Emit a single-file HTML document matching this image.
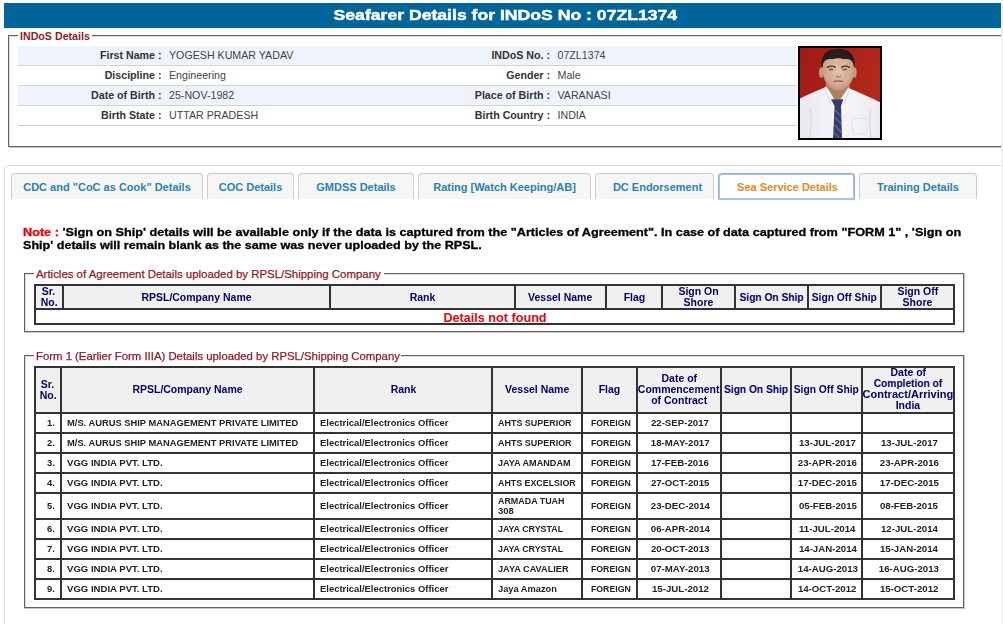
<!DOCTYPE html><html><head><meta charset="utf-8"><title>Seafarer Details</title><style>
html,body{margin:0;padding:0;}
body{width:1003px;height:624px;overflow:hidden;position:relative;background:#fff;font-family:"Liberation Sans", sans-serif;}
.abs{position:absolute;}
.nw{white-space:nowrap;}
.hdr{left:4px;top:3px;width:997px;height:25px;background:#006699;}
.title{left:0;top:3px;width:1011px;height:25px;line-height:25px;text-align:center;color:#fff;font-weight:bold;font-size:14.6px;-webkit-text-stroke:0.45px #fff;}
.title span{display:inline-block;transform:scaleX(1.207);transform-origin:center;}
.ln{background:#636363;}
.ln2{background:#c8c8c8;}
.ln3{background:#dedede;}
.leg{color:#8e1b2c;font-size:10.67px;font-weight:bold;line-height:12px;}
.leg2{color:#8e1b2c;font-size:11.43px;line-height:13px;-webkit-text-stroke:0.25px #8e1b2c;}
.row{left:18px;width:779px;height:19px;border-bottom:1px solid #d3d3d3;}
.row.alt{background:#eff4fc;}
.lab{font-size:10.67px;font-weight:bold;color:#333;text-align:right;line-height:19px;height:19px;}
.val{font-size:10.67px;color:#444;line-height:19px;height:19px;}
.photo{left:798px;top:46px;width:80px;height:90px;border:2px solid #000;overflow:hidden;}
.tabs{left:4px;top:165px;width:1020px;height:480px;border:1px solid #ddd;border-radius:4px;box-sizing:border-box;}
.tab{top:173px;height:26px;box-sizing:border-box;border:1px solid #ccc;border-bottom:0;border-radius:4px 4px 0 0;background:#f6f6f6;color:#2b81b3;font-weight:bold;font-size:11px;text-align:center;line-height:27px;}
.tab.act{background:#fff;color:#df8a26;border:1px solid #9fb0cc;border-bottom-color:#a9c1ee;height:27px;box-shadow:0 0 0 1px #a9c1ee inset, 0 0 1px 0 #a6c0ea;border-radius:4px 4px 1px 1px;}
.note{left:22.6px;font-size:11.3px;font-weight:bold;color:#000;-webkit-text-stroke:0.3px;line-height:13px;height:13px;transform-origin:left center;}
.red{color:#e8000b;}
table{border-collapse:separate;border-spacing:0;border:1px solid #333;table-layout:fixed;position:absolute;left:34px;width:921px;}
td,th{border:1px solid #333;padding:0;overflow:visible;}
th{background:#f0f0f0;color:#000066;font-size:10.2px;font-weight:bold;line-height:11px;text-align:center;vertical-align:middle;white-space:nowrap;}
td{font-size:8.3px;font-weight:bold;color:#222;line-height:10px;vertical-align:middle;white-space:nowrap;}
td.c{text-align:center;padding-left:2px;}
td.r{text-align:right;padding-right:5px;}
td.l{text-align:left;padding-left:5px;}
.s{display:inline-block;transform-origin:left center;}
.c .s, th .s{transform-origin:center center;}
.r .s{transform-origin:right center;}
.nf{padding-top:0;color:#dc0812;font-size:12px;font-weight:bold;text-align:center;line-height:13px;}
</style></head><body>
<div class="abs hdr"></div>
<div class="abs title nw"><span>Seafarer Details for INDoS No : 07ZL1374</span></div>
<div class="abs ln" style="left:8px;top:35px;width:1px;height:112px"></div>
<div class="abs ln" style="left:8px;top:35px;width:10px;height:1px"></div>
<div class="abs ln" style="left:92px;top:35px;width:909px;height:1px"></div>
<div class="abs ln" style="left:8px;top:146px;width:993px;height:1px"></div>
<div class="abs ln3" style="left:9px;top:36px;width:1px;height:110px"></div>
<div class="abs ln3" style="left:9px;top:36px;width:9px;height:1px"></div>
<div class="abs ln3" style="left:92px;top:36px;width:909px;height:1px"></div>
<div class="abs ln2" style="left:9px;top:147px;width:992px;height:1px"></div>
<div class="abs leg nw" style="left:20px;top:30px">INDoS Details</div>
<div class="abs row alt" style="top:46px"></div>
<div class="abs lab nw" style="left:18px;width:143.5px;top:46px">First Name :</div>
<div class="abs val nw" style="left:169px;top:46px">YOGESH KUMAR YADAV</div>
<div class="abs lab nw" style="left:400px;width:150px;top:46px">INDoS No. :</div>
<div class="abs val nw" style="left:557.5px;top:46px">07ZL1374</div>
<div class="abs row" style="top:66px"></div>
<div class="abs lab nw" style="left:18px;width:143.5px;top:66px">Discipline :</div>
<div class="abs val nw" style="left:169px;top:66px">Engineering</div>
<div class="abs lab nw" style="left:400px;width:150px;top:66px">Gender :</div>
<div class="abs val nw" style="left:557.5px;top:66px">Male</div>
<div class="abs row alt" style="top:86px"></div>
<div class="abs lab nw" style="left:18px;width:143.5px;top:86px">Date of Birth :</div>
<div class="abs val nw" style="left:169px;top:86px">25-NOV-1982</div>
<div class="abs lab nw" style="left:400px;width:150px;top:86px">Place of Birth :</div>
<div class="abs val nw" style="left:557.5px;top:86px">VARANASI</div>
<div class="abs row" style="top:106px"></div>
<div class="abs lab nw" style="left:18px;width:143.5px;top:106px">Birth State :</div>
<div class="abs val nw" style="left:169px;top:106px">UTTAR PRADESH</div>
<div class="abs lab nw" style="left:400px;width:150px;top:106px">Birth Country :</div>
<div class="abs val nw" style="left:557.5px;top:106px">INDIA</div>
<div class="abs photo"><svg width="80" height="90" viewBox="0 0 80 90" style="display:block"><defs><linearGradient id="pbg" x1="0" y1="0" x2="1" y2="0.3"><stop offset="0" stop-color="#9f1c15"/><stop offset="0.55" stop-color="#aa2118"/><stop offset="1" stop-color="#b3291b"/></linearGradient><radialGradient id="pfc" cx="0.5" cy="0.45" r="0.62"><stop offset="0" stop-color="#e3c2ad"/><stop offset="0.65" stop-color="#d2aa92"/><stop offset="1" stop-color="#b0866c"/></radialGradient><linearGradient id="psh" x1="0" y1="0" x2="1" y2="0"><stop offset="0" stop-color="#e9e7ef"/><stop offset="0.35" stop-color="#f4f2f7"/><stop offset="0.7" stop-color="#f4f2f7"/><stop offset="1" stop-color="#ebe9f0"/></linearGradient><filter id="pbl" x="-5%" y="-5%" width="110%" height="110%"><feGaussianBlur stdDeviation="0.5"/></filter></defs><rect width="80" height="90" fill="url(#pbg)"/><g filter="url(#pbl)"><path d="M-1 51 C8 46.5 17 42.5 24.6 39.4 L38 44 L49.7 40.6 C60 45 70 49.5 81 54.8 L81 91 L-1 91Z" fill="url(#psh)"/><path d="M27 33 L50 33 L49.6 41.5 L43.5 51.5 L31 51.5 L25 39.8Z" fill="#ad7f64"/><ellipse cx="21.4" cy="24.4" rx="2.4" ry="5.4" fill="#c39a80"/><ellipse cx="54.5" cy="24.4" rx="2.2" ry="5.4" fill="#c39a80"/><path d="M22.6 22 C22 12 27 6 38.3 6 C49.6 6 54.6 12 54 22 C53.8 28 52.6 32 50.4 35.4 C47.4 40 43 42.4 38.4 42.4 C34 42.4 29.6 40 26.6 35.4 C24.2 32 22.8 28 22.6 22Z" fill="url(#pfc)"/><path d="M21.8 20.5 C20.4 9 24.5 0.7 38 0.7 C51.5 0.7 55.8 9 54.4 20.5 C53.8 16 52.6 13.4 50.6 12 C47.8 10.2 44.6 11.4 42 10.8 C39.6 10.2 37 10.2 34.6 10.8 C32 11.4 28.8 10.2 26 12 C23.8 13.4 22.4 16 21.8 20.5Z" fill="#2a1e1b"/><path d="M27.3 19.3 C29.8 17.9 32.8 17.9 35.2 19.1 M41.6 19.1 C44 17.9 47 17.9 49.5 19.3" stroke="#44302a" stroke-width="1.4" fill="none" stroke-linecap="round"/><ellipse cx="31.2" cy="21.6" rx="2.4" ry="1" fill="#7a5a4a"/><ellipse cx="44.8" cy="21.6" rx="2.4" ry="1" fill="#7a5a4a"/><path d="M36 28.2 C37.4 29.2 39.6 29.2 41 28.2" stroke="#a67a62" stroke-width="1.1" fill="none"/><path d="M34 33.5 C36.4 32.8 40.6 32.8 43 33.5" stroke="#8f5a4e" stroke-width="1.3" fill="none" stroke-linecap="round"/><path d="M24.6 39.4 L26.4 38.5 L34.5 51.5 L31 56 Z" fill="#fbfafc"/><path d="M49.7 40.6 L48.4 39.6 L40.2 51.5 L43.8 56 Z" fill="#fbfafc"/><path d="M31 56 L24.6 39.4 M43.8 56 L49.7 40.6" stroke="#cfccd6" stroke-width="0.7" fill="none"/><path d="M31 51.2 L43.4 51.2 L41 58 L42 91 L33 91 L34.6 58Z" fill="#343e6c"/><path d="M35.2 62 L40.6 68 M34.9 69 L41 76 M34.4 76.5 L41.4 84.5 M33.8 84 L40 91" stroke="#7a84b0" stroke-width="1" fill="none"/><path d="M52 70 L67 70.5 L66.5 86 L52.5 85.5Z" fill="none" stroke="#e0dde6" stroke-width="0.8"/><path d="M10 60 C12 70 11 80 10 90 M70 62 C69 72 70 82 71 90" stroke="#dddae4" stroke-width="1.4" fill="none"/></g></svg>
</div>
<div class="abs tabs"></div>
<div class="abs tab nw" style="left:11px;width:192px;">CDC and "CoC as Cook" Details</div>
<div class="abs tab nw" style="left:207px;width:87px;">COC Details</div>
<div class="abs tab nw" style="left:298px;width:116px;">GMDSS Details</div>
<div class="abs tab nw" style="left:418px;width:173px;">Rating [Watch Keeping/AB]</div>
<div class="abs tab nw" style="left:595px;width:119px;padding-left:6px;">DC Endorsement</div>
<div class="abs tab nw act" style="left:718px;width:137px;padding-left:2px;">Sea Service Details</div>
<div class="abs tab nw" style="left:859px;width:118px;">Training Details</div>
<div class="abs note nw" style="top:226px;transform:scaleX(1.1220)"><span class="red">Note :</span> 'Sign on Ship' details will be available only if the data is captured from the "Articles of Agreement". In case of data captured from "FORM 1" , 'Sign on</div>
<div class="abs note nw" style="top:239px;transform:scaleX(1.1135)">Ship' details will remain blank as the same was never uploaded by the RPSL.</div>
<div class="abs ln" style="left:24px;top:273px;width:1px;height:59px"></div>
<div class="abs ln" style="left:963px;top:273px;width:1px;height:59px"></div>
<div class="abs ln2" style="left:964px;top:273px;width:1px;height:60px"></div>
<div class="abs ln" style="left:24px;top:273px;width:10px;height:1px"></div>
<div class="abs ln" style="left:384px;top:273px;width:580px;height:1px"></div>
<div class="abs ln" style="left:24px;top:331px;width:940px;height:1px"></div>
<div class="abs ln3" style="left:25px;top:274px;width:1px;height:57px"></div>
<div class="abs ln3" style="left:25px;top:274px;width:9px;height:1px"></div>
<div class="abs ln3" style="left:384px;top:274px;width:579px;height:1px"></div>
<div class="abs ln2" style="left:24px;top:332px;width:941px;height:1px"></div>
<div class="abs leg2 nw" style="left:36px;top:268px;transform-origin:left center;transform:scaleX(1)">Articles of Agreement Details uploaded by RPSL/Shipping Company</div>
<table style="top:284px"><colgroup><col style="width:28px"><col style="width:267px"><col style="width:185px"><col style="width:91px"><col style="width:56px"><col style="width:73px"><col style="width:73px"><col style="width:73px"><col style="width:73px"></colgroup>
<tr style="height:24px"><th><span class="s" style="transform:scaleX(1.03)">Sr.</span><br><span class="s" style="transform:scaleX(1.03)">No.</span></th><th><span class="s" style="transform:scaleX(1.03)">RPSL/Company Name</span></th><th><span class="s" style="transform:scaleX(1.03)">Rank</span></th><th><span class="s" style="transform:scaleX(1.03)">Vessel Name</span></th><th><span class="s" style="transform:scaleX(1.03)">Flag</span></th><th><span class="s" style="transform:scaleX(1.03)">Sign On</span><br><span class="s" style="transform:scaleX(1.03)">Shore</span></th><th><span class="s" style="transform:scaleX(1.0)">Sign On Ship</span></th><th><span class="s" style="transform:scaleX(1.01)">Sign Off Ship</span></th><th><span class="s" style="transform:scaleX(1.03)">Sign Off</span><br><span class="s" style="transform:scaleX(1.03)">Shore</span></th></tr>
<tr style="height:15px"><td colspan="9" class="nf"><span class="s" style="transform-origin:center;transform:translateY(1.6px) scaleX(1.053)">Details not found</span></td></tr>
</table>
<div class="abs ln" style="left:24px;top:355px;width:1px;height:253px"></div>
<div class="abs ln" style="left:963px;top:355px;width:1px;height:253px"></div>
<div class="abs ln2" style="left:964px;top:355px;width:1px;height:254px"></div>
<div class="abs ln" style="left:24px;top:355px;width:10px;height:1px"></div>
<div class="abs ln" style="left:401px;top:355px;width:563px;height:1px"></div>
<div class="abs ln" style="left:24px;top:607px;width:940px;height:1px"></div>
<div class="abs ln3" style="left:25px;top:356px;width:1px;height:251px"></div>
<div class="abs ln3" style="left:25px;top:356px;width:9px;height:1px"></div>
<div class="abs ln3" style="left:401px;top:356px;width:562px;height:1px"></div>
<div class="abs ln2" style="left:24px;top:608px;width:941px;height:1px"></div>
<div class="abs leg2 nw" style="left:36.1px;top:350px;transform-origin:left center;transform:scaleX(0.9935)">Form 1 (Earlier Form IIIA) Details uploaded by RPSL/Shipping Company</div>
<table style="top:366px"><colgroup><col style="width:26px"><col style="width:253px"><col style="width:178px"><col style="width:90px"><col style="width:55px"><col style="width:84px"><col style="width:70px"><col style="width:71px"><col style="width:92px"></colgroup>
<tr style="height:46px"><th><span class="s" style="transform:scaleX(1.03)">Sr.</span><br><span class="s" style="transform:scaleX(1.03)">No.</span></th><th><div style="position:relative;top:-1px"><span class="s" style="transform:scaleX(1.03)">RPSL/Company Name</span></div></th><th><div style="position:relative;top:-1px"><span class="s" style="transform:scaleX(1.03)">Rank</span></div></th><th><div style="position:relative;top:-1px"><span class="s" style="transform:scaleX(1.03)">Vessel Name</span></div></th><th><div style="position:relative;top:-1px"><span class="s" style="transform:scaleX(1.03)">Flag</span></div></th><th><div style="position:relative;top:-1px"><span class="s" style="transform:scaleX(1.03)">Date of</span><br><span class="s" style="transform:scaleX(1.03)">Commencement</span><br><span class="s" style="transform:scaleX(1.03)">of Contract</span></div></th><th><div style="position:relative;top:-1px"><span class="s" style="transform:scaleX(1.0)">Sign On Ship</span></div></th><th><div style="position:relative;top:-1px"><span class="s" style="transform:scaleX(1.01)">Sign Off Ship</span></div></th><th><div style="position:relative;top:-1px"><span class="s" style="transform:scaleX(1.03)">Date of</span><br><span class="s" style="transform:scaleX(1.0)">Completion of</span><br><span class="s" style="transform:scaleX(1.085)">Contract/Arriving</span><br><span class="s" style="transform:scaleX(1.03)">India</span></div></th></tr>
<tr style="height:20px"><td class="r"><span class="s" style="transform:scaleX(1.127)">1.</span></td><td class="l"><span class="s" style="transform:scaleX(1.126)">M/S. AURUS SHIP MANAGEMENT PRIVATE LIMITED</span></td><td class="l"><span class="s" style="transform:scaleX(1.136)">Electrical/Electronics Officer</span></td><td class="l"><span class="s" style="transform:scaleX(1.078)">AHTS SUPERIOR</span></td><td class="c"><span class="s" style="transform:scaleX(1.058)">FOREIGN</span></td><td class="c"><span class="s" style="transform:scaleX(1.164)">22-SEP-2017</span></td><td class="c"></td><td class="c"><span class="s" style="transform:scaleX(1.164)"></span></td><td class="c"><span class="s" style="transform:scaleX(1.164)"></span></td></tr>
<tr style="height:20px"><td class="r"><span class="s" style="transform:scaleX(1.127)">2.</span></td><td class="l"><span class="s" style="transform:scaleX(1.126)">M/S. AURUS SHIP MANAGEMENT PRIVATE LIMITED</span></td><td class="l"><span class="s" style="transform:scaleX(1.136)">Electrical/Electronics Officer</span></td><td class="l"><span class="s" style="transform:scaleX(1.078)">AHTS SUPERIOR</span></td><td class="c"><span class="s" style="transform:scaleX(1.058)">FOREIGN</span></td><td class="c"><span class="s" style="transform:scaleX(1.164)">18-MAY-2017</span></td><td class="c"></td><td class="c"><span class="s" style="transform:scaleX(1.164)">13-JUL-2017</span></td><td class="c"><span class="s" style="transform:scaleX(1.164)">13-JUL-2017</span></td></tr>
<tr style="height:20px"><td class="r"><span class="s" style="transform:scaleX(1.127)">3.</span></td><td class="l"><span class="s" style="transform:scaleX(1.153)">VGG INDIA PVT. LTD.</span></td><td class="l"><span class="s" style="transform:scaleX(1.136)">Electrical/Electronics Officer</span></td><td class="l"><span class="s" style="transform:scaleX(1.099)">JAYA AMANDAM</span></td><td class="c"><span class="s" style="transform:scaleX(1.058)">FOREIGN</span></td><td class="c"><span class="s" style="transform:scaleX(1.164)">17-FEB-2016</span></td><td class="c"></td><td class="c"><span class="s" style="transform:scaleX(1.164)">23-APR-2016</span></td><td class="c"><span class="s" style="transform:scaleX(1.164)">23-APR-2016</span></td></tr>
<tr style="height:20px"><td class="r"><span class="s" style="transform:scaleX(1.127)">4.</span></td><td class="l"><span class="s" style="transform:scaleX(1.153)">VGG INDIA PVT. LTD.</span></td><td class="l"><span class="s" style="transform:scaleX(1.136)">Electrical/Electronics Officer</span></td><td class="l"><span class="s" style="transform:scaleX(1.067)">AHTS EXCELSIOR</span></td><td class="c"><span class="s" style="transform:scaleX(1.058)">FOREIGN</span></td><td class="c"><span class="s" style="transform:scaleX(1.164)">27-OCT-2015</span></td><td class="c"></td><td class="c"><span class="s" style="transform:scaleX(1.164)">17-DEC-2015</span></td><td class="c"><span class="s" style="transform:scaleX(1.164)">17-DEC-2015</span></td></tr>
<tr style="height:26px"><td class="r"><span class="s" style="transform:scaleX(1.127)">5.</span></td><td class="l"><span class="s" style="transform:scaleX(1.153)">VGG INDIA PVT. LTD.</span></td><td class="l"><span class="s" style="transform:scaleX(1.136)">Electrical/Electronics Officer</span></td><td class="l"><span class="s" style="transform:scaleX(1.073)">ARMADA TUAH</span><br><span class="s" style="transform:scaleX(1.127)">308</span></td><td class="c"><span class="s" style="transform:scaleX(1.058)">FOREIGN</span></td><td class="c"><span class="s" style="transform:scaleX(1.164)">23-DEC-2014</span></td><td class="c"></td><td class="c"><span class="s" style="transform:scaleX(1.164)">05-FEB-2015</span></td><td class="c"><span class="s" style="transform:scaleX(1.164)">08-FEB-2015</span></td></tr>
<tr style="height:20px"><td class="r"><span class="s" style="transform:scaleX(1.127)">6.</span></td><td class="l"><span class="s" style="transform:scaleX(1.153)">VGG INDIA PVT. LTD.</span></td><td class="l"><span class="s" style="transform:scaleX(1.136)">Electrical/Electronics Officer</span></td><td class="l"><span class="s" style="transform:scaleX(1.069)">JAYA CRYSTAL</span></td><td class="c"><span class="s" style="transform:scaleX(1.058)">FOREIGN</span></td><td class="c"><span class="s" style="transform:scaleX(1.164)">06-APR-2014</span></td><td class="c"></td><td class="c"><span class="s" style="transform:scaleX(1.164)">11-JUL-2014</span></td><td class="c"><span class="s" style="transform:scaleX(1.164)">12-JUL-2014</span></td></tr>
<tr style="height:20px"><td class="r"><span class="s" style="transform:scaleX(1.127)">7.</span></td><td class="l"><span class="s" style="transform:scaleX(1.153)">VGG INDIA PVT. LTD.</span></td><td class="l"><span class="s" style="transform:scaleX(1.136)">Electrical/Electronics Officer</span></td><td class="l"><span class="s" style="transform:scaleX(1.069)">JAYA CRYSTAL</span></td><td class="c"><span class="s" style="transform:scaleX(1.058)">FOREIGN</span></td><td class="c"><span class="s" style="transform:scaleX(1.164)">20-OCT-2013</span></td><td class="c"></td><td class="c"><span class="s" style="transform:scaleX(1.164)">14-JAN-2014</span></td><td class="c"><span class="s" style="transform:scaleX(1.164)">15-JAN-2014</span></td></tr>
<tr style="height:20px"><td class="r"><span class="s" style="transform:scaleX(1.127)">8.</span></td><td class="l"><span class="s" style="transform:scaleX(1.153)">VGG INDIA PVT. LTD.</span></td><td class="l"><span class="s" style="transform:scaleX(1.136)">Electrical/Electronics Officer</span></td><td class="l"><span class="s" style="transform:scaleX(1.106)">JAYA CAVALIER</span></td><td class="c"><span class="s" style="transform:scaleX(1.058)">FOREIGN</span></td><td class="c"><span class="s" style="transform:scaleX(1.164)">07-MAY-2013</span></td><td class="c"></td><td class="c"><span class="s" style="transform:scaleX(1.164)">14-AUG-2013</span></td><td class="c"><span class="s" style="transform:scaleX(1.164)">16-AUG-2013</span></td></tr>
<tr style="height:20px"><td class="r"><span class="s" style="transform:scaleX(1.127)">9.</span></td><td class="l"><span class="s" style="transform:scaleX(1.153)">VGG INDIA PVT. LTD.</span></td><td class="l"><span class="s" style="transform:scaleX(1.136)">Electrical/Electronics Officer</span></td><td class="l"><span class="s" style="transform:scaleX(1.116)">Jaya Amazon</span></td><td class="c"><span class="s" style="transform:scaleX(1.058)">FOREIGN</span></td><td class="c"><span class="s" style="transform:scaleX(1.164)">15-JUL-2012</span></td><td class="c"></td><td class="c"><span class="s" style="transform:scaleX(1.164)">14-OCT-2012</span></td><td class="c"><span class="s" style="transform:scaleX(1.164)">15-OCT-2012</span></td></tr>
</table>
<div class="abs" style="left:1001px;top:0;width:2px;height:624px;background:#f1f1f1"></div>
</body></html>
